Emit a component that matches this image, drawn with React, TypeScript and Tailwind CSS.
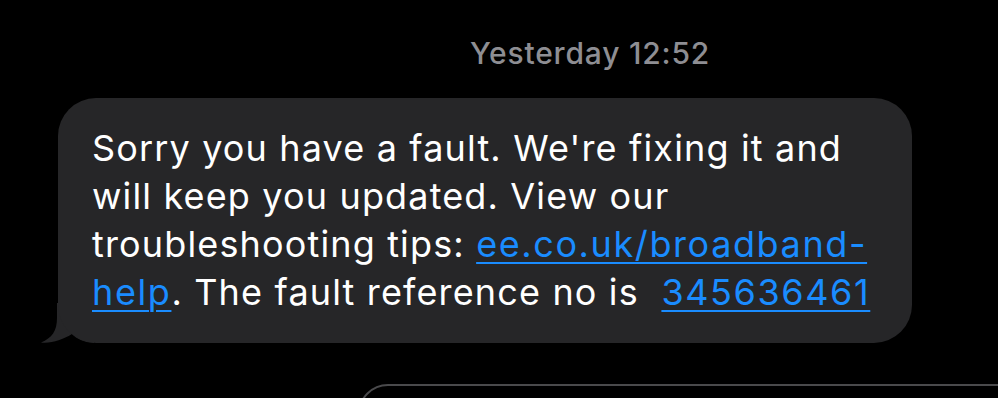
export default function App() {
  const link = "text-[#1a8cff] underline decoration-2 underline-offset-[5px] tracking-[1.6px]";
  return (
    <div className="w-[998px] h-[398px] bg-black overflow-hidden flex flex-col" style={{ fontFamily: 'Inter, "Liberation Sans", Arial, sans-serif' }}>
      <div className="pt-[34px] pl-[470px] text-[30px] leading-[38px] text-[#8e8e93] font-medium tracking-[0.8px] shrink-0">
        Yesterday 12:52
      </div>
      <div className="mt-[26px] ml-[58px] w-[854px] h-[245px] relative shrink-0">
        <svg className="absolute left-[-20px] bottom-0" width="60" height="40" viewBox="0 0 60 40">
          <path d="M19 0 L19 15 C19 28 14 35 3 39.5 C14 40.5 24 37 34 31 C39 36 45 39 56 40 L56 0 Z" fill="#262628" />
        </svg>
        <div className="relative h-full rounded-[38px] bg-[#262628] pl-[34px] pt-[26px] text-[36px] leading-[48px] text-white tracking-[1.15px]">
          <div>Sorry you have a fault. We're fixing it and</div>
          <div>will keep you updated. View our</div>
          <div>troubleshooting tips: <span className={link}>ee.co.uk/broadband-</span></div>
          <div><span className={link}>help</span>. The fault reference no is&nbsp; <span className={link}>345636461</span></div>
        </div>
      </div>
      <div className="mt-[41px] ml-[358px] w-[700px] h-[60px] rounded-[30px] border-2 border-[#4a4a4c] shrink-0" />
    </div>
  );
}
